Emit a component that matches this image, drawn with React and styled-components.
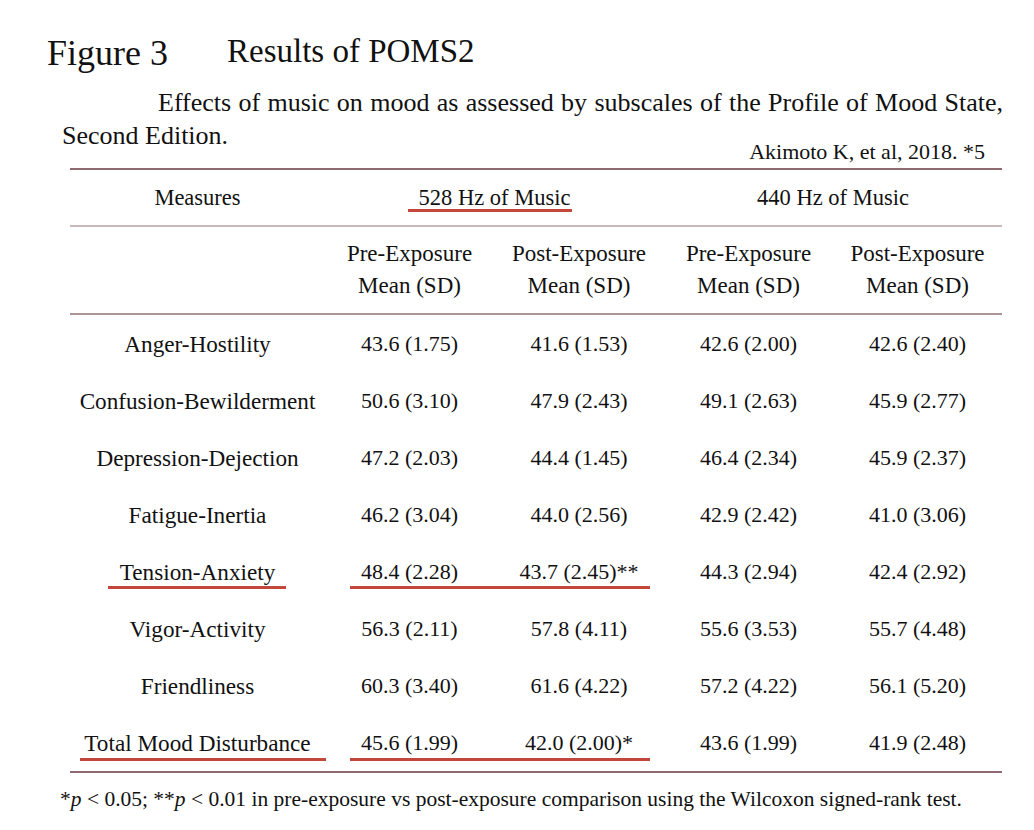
import React from "react";
import styled, { createGlobalStyle } from "styled-components";

const Global = createGlobalStyle`
  html, body { margin: 0; padding: 0; background: #ffffff; }
  body { font-family: "Liberation Serif", "Times New Roman", serif; color: #111111; }
`;

const Page = styled.div`
  width: 1034px;
  height: 830px;
  box-sizing: border-box;
  padding-top: 33px;
  display: flex;
  flex-direction: column;
`;

const TitleRow = styled.div`
  display: flex;
  align-items: flex-start;
  margin-left: 47px;
`;

const FigureLabel = styled.div`
  font-size: 36px;
  line-height: 40px;
  width: 180px;
`;

const FigureTitle = styled.div`
  font-size: 33px;
  line-height: 40px;
  margin-top: -2px;
`;

const CaptionLead = styled.p`
  margin: 13px 0 0 158px;
  width: 845px;
  font-size: 26px;
  line-height: 33px;
  text-align: justify;
  text-align-last: justify;
  white-space: nowrap;
`;

const CaptionRow = styled.div`
  display: flex;
  justify-content: space-between;
  align-items: flex-start;
  margin-left: 62px;
  width: 923px;
`;

const CaptionTail = styled.span`
  font-size: 26px;
  line-height: 33px;
`;

const Source = styled.span`
  margin-top: 20px;
  font-size: 22px;
  line-height: 26px;
`;

const Table = styled.div`
  margin: 3px 0 0 70px;
  width: 932px;
  border-top: 2px solid #8f6b70;
  border-bottom: 2px solid #8f6b70;
  font-size: 22.5px;
  line-height: 26px;
`;

const Row = styled.div`
  display: grid;
  grid-template-columns: 255px 169px 170px 169px 169px;
  height: ${(p) => p.$h || 57}px;
  box-sizing: border-box;
  border-bottom: ${(p) => (p.$rule ? `2px solid ${p.$rule}` : "none")};
`;

const Cell = styled.div`
  grid-row: 1;
  grid-column: ${(p) => p.$col};
  display: flex;
  align-items: center;
  justify-content: center;
  text-align: center;
  font-size: ${(p) => p.$fs || 22.5}px;
  line-height: ${(p) => p.$lh || 26}px;
  white-space: nowrap;
`;

const Mark = styled.div`
  grid-row: 1;
  grid-column: ${(p) => p.$col};
  align-self: end;
  justify-self: start;
  width: ${(p) => p.$w}px;
  margin-left: ${(p) => p.$left}px;
  margin-bottom: ${(p) => p.$bottom}px;
  height: 3px;
  background: #c4473b;
`;

const Footnote = styled.div`
  margin: 14px 0 0 60px;
  font-size: 21.5px;
  line-height: 24px;
  white-space: nowrap;
`;

const Ital = styled.i`
  font-style: italic;
`;

const rows = [
  ["Anger-Hostility", "43.6 (1.75)", "41.6 (1.53)", "42.6 (2.00)", "42.6 (2.40)"],
  ["Confusion-Bewilderment", "50.6 (3.10)", "47.9 (2.43)", "49.1 (2.63)", "45.9 (2.77)"],
  ["Depression-Dejection", "47.2 (2.03)", "44.4 (1.45)", "46.4 (2.34)", "45.9 (2.37)"],
  ["Fatigue-Inertia", "46.2 (3.04)", "44.0 (2.56)", "42.9 (2.42)", "41.0 (3.06)"],
  ["Tension-Anxiety", "48.4 (2.28)", "43.7 (2.45)**", "44.3 (2.94)", "42.4 (2.92)"],
  ["Vigor-Activity", "56.3 (2.11)", "57.8 (4.11)", "55.6 (3.53)", "55.7 (4.48)"],
  ["Friendliness", "60.3 (3.40)", "61.6 (4.22)", "57.2 (4.22)", "56.1 (5.20)"],
  ["Total Mood Disturbance", "45.6 (1.99)", "42.0 (2.00)*", "43.6 (1.99)", "41.9 (2.48)"],
];

const marks = {
  "Tension-Anxiety": { left: 38, w: 178, bottom: 11 },
  "Total Mood Disturbance": { left: 10, w: 246, bottom: 10 },
};

export default function App() {
  return (
    <>
      <Global />
      <Page>
        <TitleRow>
          <FigureLabel>Figure 3</FigureLabel>
          <FigureTitle>Results of POMS2</FigureTitle>
        </TitleRow>
        <CaptionLead>
          Effects of music on mood as assessed by subscales of the Profile of Mood State,
        </CaptionLead>
        <CaptionRow>
          <CaptionTail>Second Edition.</CaptionTail>
          <Source>Akimoto K, et al, 2018. *5</Source>
        </CaptionRow>
        <Table>
          <Row $h={57} $rule="#c9b9ba">
            <Cell $col="1">Measures</Cell>
            <Cell $col="2 / 4">528 Hz of Music</Cell>
            <Mark $col="2 / 4" $left={83} $w={164} $bottom={13} />
            <Cell $col="4 / 6">440 Hz of Music</Cell>
          </Row>
          <Row $h={88} $rule="#ad9597">
            <Cell $col="1" />
            <Cell $col="2" $lh={32} $fs={23}>Pre-Exposure<br />Mean (SD)</Cell>
            <Cell $col="3" $lh={32} $fs={23}>Post-Exposure<br />Mean (SD)</Cell>
            <Cell $col="4" $lh={32} $fs={23}>Pre-Exposure<br />Mean (SD)</Cell>
            <Cell $col="5" $lh={32} $fs={23}>Post-Exposure<br />Mean (SD)</Cell>
          </Row>
          {rows.map((r) => {
            const m = marks[r[0]];
            return (
              <Row key={r[0]}>
                {r.map((v, i) => (
                  <Cell key={i} $col={String(i + 1)} $fs={i === 0 ? 23.2 : 22}>{v}</Cell>
                ))}
                {m && <Mark $col="1" $left={m.left} $w={m.w} $bottom={m.bottom} />}
                {m && <Mark $col="2 / 4" $left={25} $w={300} $bottom={m.bottom} />}
              </Row>
            );
          })}
        </Table>
        <Footnote>
          *<Ital>p</Ital> &lt; 0.05; **<Ital>p</Ital> &lt; 0.01 in pre-exposure vs post-exposure
          comparison using the Wilcoxon signed-rank test.
        </Footnote>
      </Page>
    </>
  );
}
